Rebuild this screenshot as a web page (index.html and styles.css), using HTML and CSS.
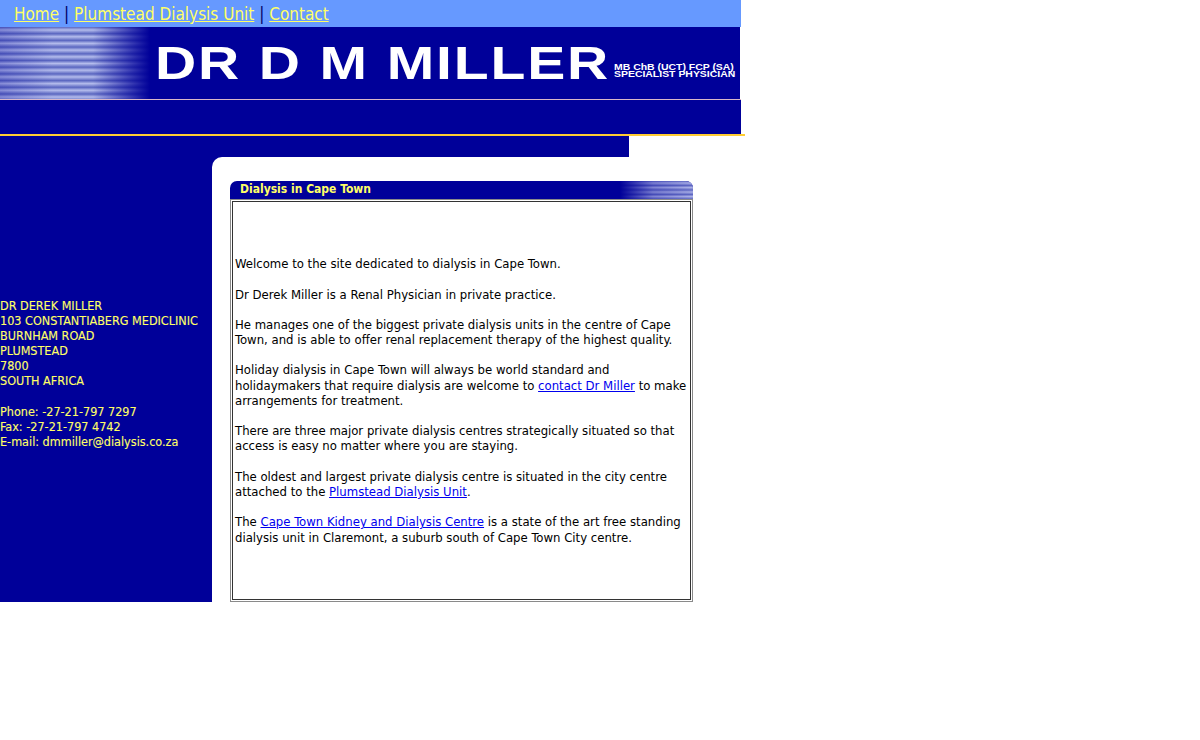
FILE: index.html
```html
<!DOCTYPE html>
<html>
<head>
<meta charset="utf-8">
<title>Dialysis in Cape Town - Dr D M Miller</title>
<link rel="stylesheet" href="styles.css">
</head>
<body>
<div class="nav"><a href="#">Home</a> | <a href="#">Plumstead Dialysis Unit</a> | <a href="#">Contact</a></div>
<div class="banner">
  <div class="stripes"></div>
  <div class="title-wrap"><span class="title">DR D M MILLER</span></div>
  <div class="subtitle"><span>MB ChB (UCT) FCP (SA)<br>SPECIALIST PHYSICIAN</span></div>
</div>
<div class="rule-light"></div>
<div class="band"></div>
<div class="rule-gold"></div>
<div class="main">
  <div class="sidebar">
    DR DEREK MILLER<br>
    103 CONSTANTIABERG MEDICLINIC<br>
    BURNHAM ROAD<br>
    PLUMSTEAD<br>
    7800<br>
    SOUTH AFRICA<br>
    <br>
    Phone: -27-21-797 7297<br>
    Fax: -27-21-797 4742<br>
    E-mail: dmmiller@dialysis.co.za
  </div>
  <div class="panel">
    <div class="box">
      <div class="box-head"><span class="box-title">Dialysis in Cape Town</span><span class="box-fade"></span></div>
      <div class="box-body">
        <div class="cell">
          <div class="copy">
            <p>Welcome to the site dedicated to dialysis in Cape Town.</p>
            <p>Dr Derek Miller is a Renal Physician in private practice.</p>
            <p>He manages one of the biggest private dialysis units in the centre of Cape Town, and is able to offer renal replacement therapy of the highest quality.</p>
            <p>Holiday dialysis in Cape Town will always be world standard and holidaymakers that require dialysis are welcome to <a href="#">contact Dr Miller</a> to make arrangements for treatment.</p>
            <p>There are three major private dialysis centres strategically situated so that access is easy no matter where you are staying.</p>
            <p>The oldest and largest private dialysis centre is situated in the city centre attached to the <a href="#">Plumstead Dialysis Unit</a>.</p>
            <p>The <a href="#">Cape Town Kidney and Dialysis Centre</a> is a state of the art free standing dialysis unit in Claremont, a suburb south of Cape Town City centre.</p>
          </div>
        </div>
      </div>
    </div>
  </div>
</div>
</body>
</html>
```
FILE: styles.css
```css
html, body {
  margin: 0;
  padding: 0;
  background: #ffffff;
  font-family: "DejaVu Sans Condensed", "DejaVu Sans", sans-serif;
}

.nav {
  width: 727px;
  height: 27px;
  padding-left: 14px;
  background: #6699ff;
  color: #000066;
  font-size: 17px;
  line-height: 28px;
  white-space: nowrap;
}
.nav a {
  color: #ffff66;
  text-decoration: underline;
}

.banner {
  width: 740px;
  height: 72px;
  background: #000099;
  display: flex;
  overflow: hidden;
}
.stripes {
  width: 150px;
  height: 72px;
  flex: none;
  background:
    linear-gradient(to right, rgba(0,0,153,0.25) 0%, rgba(0,0,153,0) 35%, rgba(0,0,153,0) 62%, #000099 100%),
    repeating-linear-gradient(to bottom, #5a66c0 0px, #b4bcec 3px, #5a66c0 6.7px);
}
.title-wrap {
  width: 464px;
  flex: none;
  padding-left: 5px;
  box-sizing: border-box;
}
.title {
  display: inline-block;
  margin-top: 9px;
  color: #ffffff;
  font-family: "Liberation Sans", Arial, sans-serif;
  font-weight: bold;
  font-size: 46px;
  letter-spacing: 1.5px;
  transform: scaleX(1.24);
  transform-origin: left center;
  white-space: nowrap;
}
.subtitle {
  padding-top: 35px;
}
.subtitle span {
  display: inline-block;
  color: #ffffff;
  font-family: "Liberation Sans", Arial, sans-serif;
  font-weight: bold;
  font-size: 9px;
  line-height: 7px;
  transform: scaleX(1.16);
  transform-origin: left center;
  white-space: nowrap;
}

.rule-light {
  width: 741px;
  height: 1px;
  background: #d8b8c8;
}
.band {
  width: 741px;
  height: 34px;
  background: #000099;
}
.rule-gold {
  width: 745px;
  height: 2px;
  background: #ffcc33;
}

.main {
  width: 745px;
  height: 466px;
  display: grid;
  grid-template-columns: 212px 1fr;
  background: linear-gradient(#000099, #000099) left top / 629px 100% no-repeat;
}
.sidebar {
  padding-top: 162px;
  color: #ffff66;
  font-size: 12.5px;
  line-height: 15.1px;
  white-space: nowrap;
  -webkit-text-stroke: 0.12px #ffff66;
}
.panel {
  margin-top: 21px;
  background: #ffffff;
  border-top-left-radius: 10px;
  padding: 24px 0 0 18px;
}
.box {
  width: 463px;
}
.box-head {
  height: 18px;
  background: #000099;
  border-radius: 7px 7px 0 0;
  display: flex;
  justify-content: space-between;
  overflow: hidden;
}
.box-title {
  padding-left: 10px;
  color: #ffff66;
  font-weight: bold;
  font-size: 12px;
  line-height: 16px;
}
.box-fade {
  width: 73px;
  height: 18px;
  background:
    linear-gradient(to right, #000099 0%, rgba(0,0,153,0.35) 45%, rgba(0,0,153,0.1) 100%),
    repeating-linear-gradient(to bottom, #6a74c8 0px, #c0c6f0 2px, #6a74c8 4.5px);
}
.box-body {
  height: 403px;
  box-sizing: border-box;
  border: 1px solid #8a8a8a;
  padding: 1px;
}
.cell {
  height: 100%;
  box-sizing: border-box;
  border: 1px solid #333333;
  padding: 0 2px;
  display: flex;
  align-items: center;
}
.copy {
  font-size: 13px;
  line-height: 15.2px;
  color: #000000;
}
.copy p {
  margin: 0 0 15.2px 0;
}
.copy p:last-child {
  margin-bottom: 0;
}
.copy a {
  color: #0000ee;
}
```
